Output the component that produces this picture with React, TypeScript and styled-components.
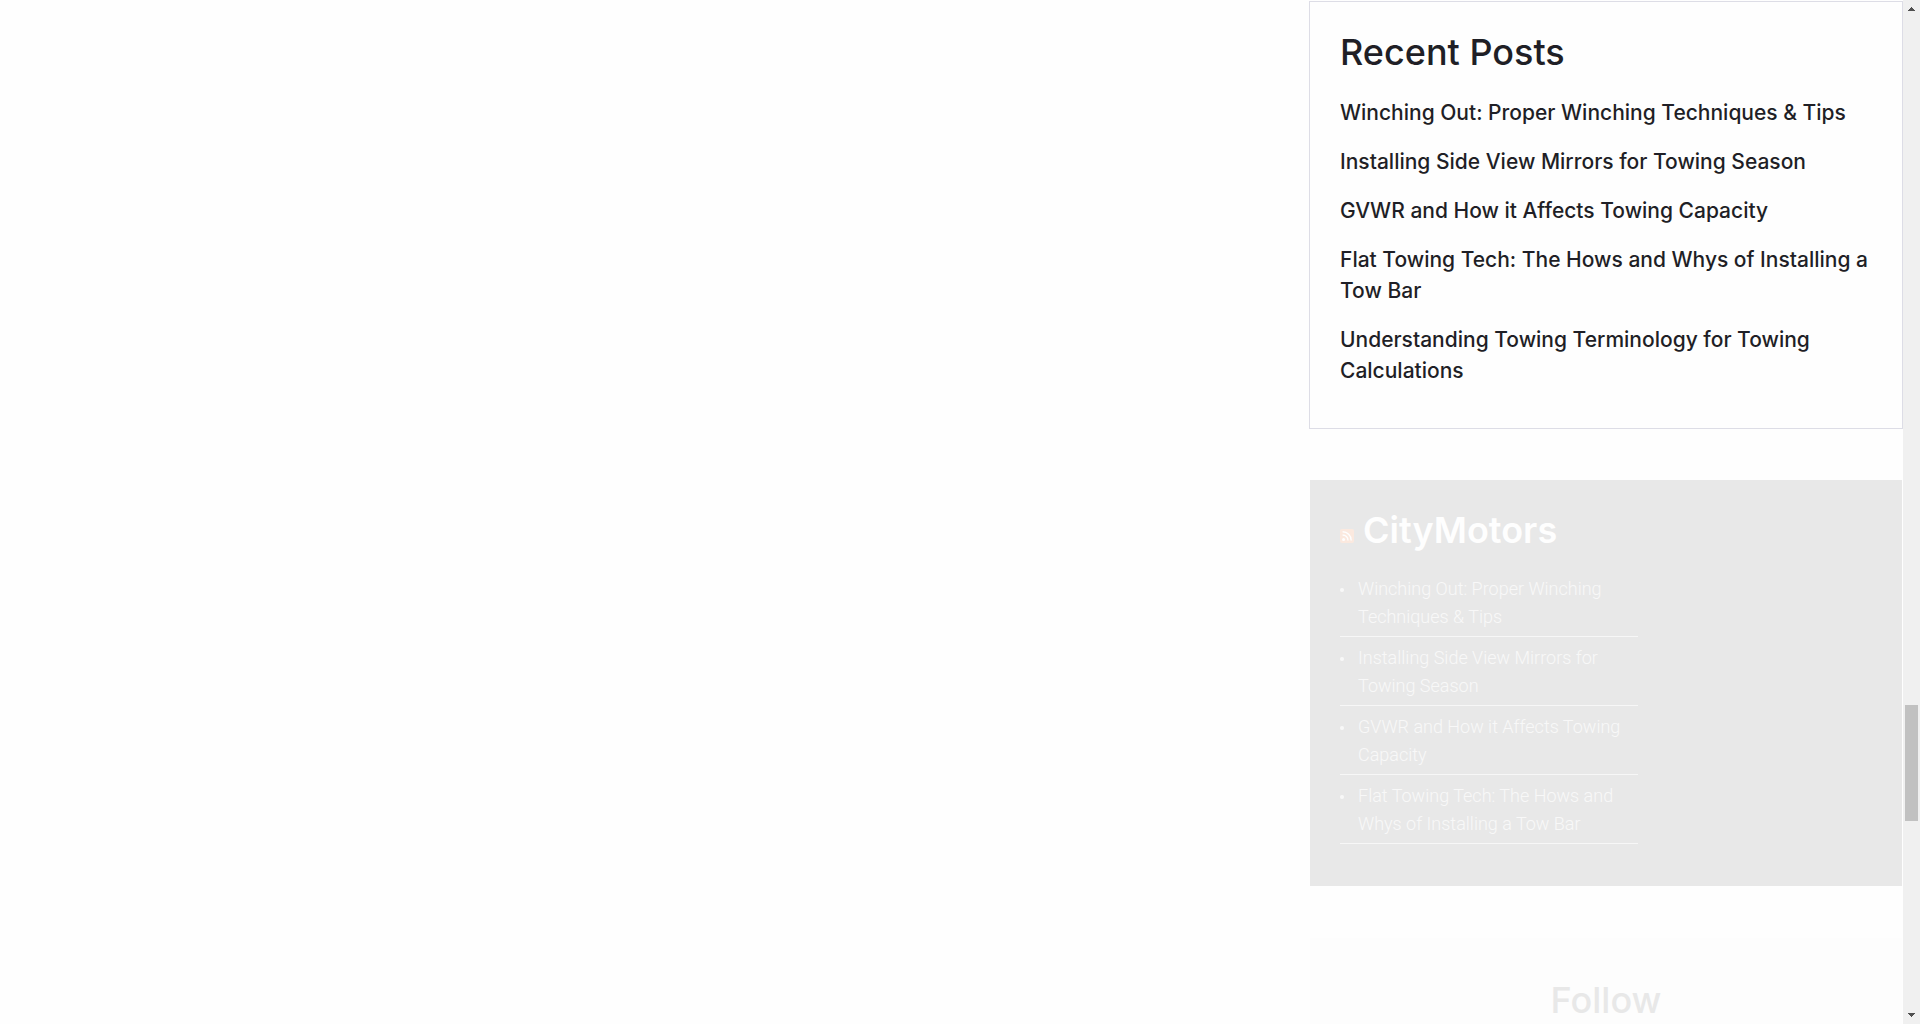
import React from "react";
import styled, { createGlobalStyle } from "styled-components";

const display = `Inter, "Open Sans", sans-serif`;

const GlobalStyle = createGlobalStyle`
  *, *::before, *::after { box-sizing: border-box; }
  body { margin: 0; background: #fefefe; color: #1f1f26; font-family: Roboto, "Open Sans", sans-serif; }
  a { color: inherit; text-decoration: none; }
`;

const Frame = styled.div`
  display: flex;
  height: 100vh;
  overflow: hidden;
`;

const Page = styled.div`
  flex: 1;
  min-width: 0;
  display: grid;
  grid-template-columns: minmax(0, 1fr) 594px;
`;

const Sidebar = styled.aside`
  display: flex;
  flex-direction: column;
  gap: 50px;
  padding-top: 1px;
`;

const Widget = styled.section<{ $tone?: "plain" | "dark" | "soft" }>`
  flex: none;
  padding: ${(p) => (p.$tone === "soft" ? "40px 30px" : "28px 30px 24px")};
  border: 1px solid ${(p) => (p.$tone === "plain" ? "#dddde6" : "#fefefe")};
  background: ${(p) => (p.$tone === "dark" ? "#e8e8e8" : p.$tone === "soft" ? "#fdfdfd" : "#fefefe")};
  background-clip: padding-box;
  text-align: ${(p) => (p.$tone === "soft" ? "center" : "left")};
`;

const Title = styled.h2<{ $weight?: number; $color?: string }>`
  margin: 0 0 23px;
  font-family: ${display};
  font-size: 36px;
  line-height: 44px;
  font-weight: ${(p) => p.$weight ?? 500};
  color: ${(p) => p.$color ?? "inherit"};
`;

const FeedTitle = styled(Title)`
  display: flex;
  align-items: baseline;
  gap: 9px;
`;

const PostList = styled.ul`
  list-style: none;
  margin: 0;
  padding: 0;
`;

const Post = styled.li`
  margin-bottom: 18px;
  font-family: ${display};
  font-size: 21px;
  line-height: 31px;
  font-weight: 500;
`;

const FeedList = styled.ul`
  list-style: none;
  width: 298px;
  max-width: 100%;
  margin: 0;
  padding: 0 0 11px;
`;

const FeedItem = styled.li`
  display: flex;
  gap: 14px;
  margin-bottom: 7px;
  padding-bottom: 5px;
  border-bottom: 1px solid #f7f7f7;
  color: #f8f8f8;
  font-size: 18px;
  line-height: 28px;
  font-weight: 300;

  &::before {
    content: "";
    flex: none;
    width: 4px;
    height: 4px;
    margin-top: 13px;
    border-radius: 2px;
    background: #f8f8f8;
  }
`;

const Scrollbar = styled.div`
  flex: none;
  width: 17px;
  display: flex;
  flex-direction: column;
  background: #f0f0f0;
`;

const Arrow = styled.svg`
  flex: none;
  width: 17px;
  height: 17px;
  fill: #505050;
`;

const Space = styled.div<{ $grow: number }>`
  flex: ${(p) => p.$grow} 0 0;
`;

const Thumb = styled(Space)`
  margin: 0 2px;
  background: #c1c1c1;
`;

const posts = [
  "Winching Out: Proper Winching Techniques & Tips",
  "Installing Side View Mirrors for Towing Season",
  "GVWR and How it Affects Towing Capacity",
  "Flat Towing Tech: The Hows and Whys of Installing a Tow Bar",
  "Understanding Towing Terminology for Towing Calculations",
];

const RssIcon = () => (
  <svg width="14" height="14" viewBox="0 0 14 14" aria-hidden="true">
    <rect width="14" height="14" rx="2" fill="#fbe9df" />
    <circle cx="3.6" cy="10.4" r="1.5" fill="#fefefe" />
    <path d="M2.6 6a5.4 5.4 0 0 1 5.4 5.4M2.6 2.8a8.6 8.6 0 0 1 8.6 8.6" fill="none" stroke="#fefefe" strokeWidth="1.4" />
  </svg>
);

export default function App() {
  return (
    <>
      <GlobalStyle />
      <Frame>
        <Page>
          <main />
          <Sidebar>
            <Widget $tone="plain">
              <Title>Recent Posts</Title>
              <PostList>
                {posts.map((post) => (
                  <Post key={post}>
                    <a href="#post">{post}</a>
                  </Post>
                ))}
              </PostList>
            </Widget>
            <Widget $tone="dark">
              <FeedTitle $weight={600} $color="#fefefe">
                <a href="#feed" aria-label="RSS feed">
                  <RssIcon />
                </a>
                <a href="#home">CityMotors</a>
              </FeedTitle>
              <FeedList>
                {posts.slice(0, 4).map((post) => (
                  <FeedItem key={post}>
                    <a href="#post">{post}</a>
                  </FeedItem>
                ))}
              </FeedList>
            </Widget>
            <Widget $tone="soft">
              <Title $color="#e8e8e8">Follow</Title>
            </Widget>
          </Sidebar>
        </Page>
        <Scrollbar aria-hidden="true">
          <Arrow viewBox="0 0 17 17" shapeRendering="crispEdges">
            <path d="M8 7h1v1h1v1h1v1h1v1H5v-1h1V9h1V8h1z" />
          </Arrow>
          <Space $grow={688} />
          <Thumb $grow={116} />
          <Space $grow={186} />
          <Arrow viewBox="0 0 17 17" shapeRendering="crispEdges">
            <path d="M5 6h7v1h-1v1h-1v1H9v1H8V9H7V8H6V7H5z" />
          </Arrow>
        </Scrollbar>
      </Frame>
    </>
  );
}
